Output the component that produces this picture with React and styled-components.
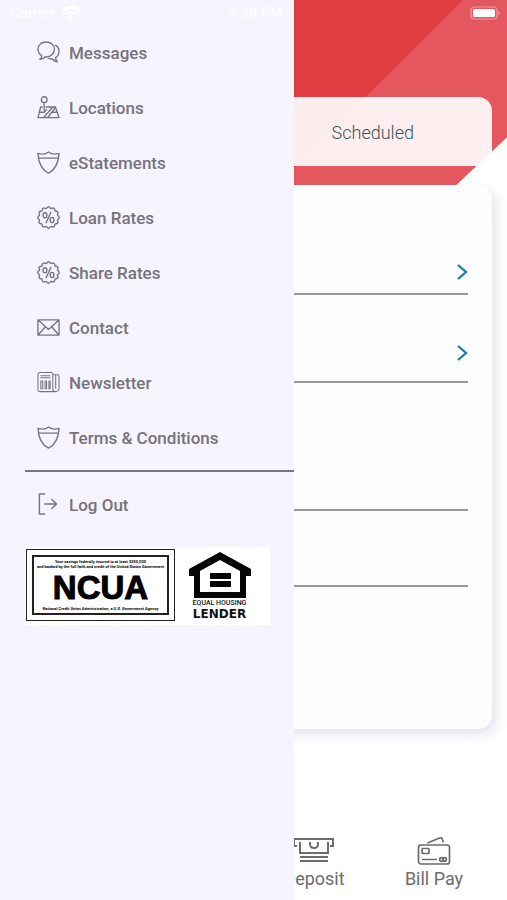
import React from "react";
import styled, { createGlobalStyle } from "styled-components";

const GlobalStyle = createGlobalStyle`
  *, *::before, *::after { box-sizing: border-box; }
  body { margin: 0; background: #fff; font-family: Roboto, "Liberation Sans", sans-serif; }
  button { font: inherit; color: inherit; border: 0; padding: 0; background: none; cursor: pointer; }
  svg { display: block; flex: none; }
`;

const Screen = styled.div`
  position: relative;
  min-height: 100vh;
  display: flex;
  flex-direction: column;
  overflow: hidden;
`;

const StatusBar = styled.div`
  position: absolute;
  inset: 0 0 auto;
  z-index: 3;
  height: 26px;
  padding: 0 6px 0 10px;
  display: grid;
  grid-template-columns: 1fr auto 1fr;
  align-items: center;
  color: #fff;
  font-size: 15px;
`;

const Signal = styled.div`
  display: flex;
  align-items: center;
  gap: 6px;
`;

const BatterySlot = styled.div`
  justify-self: end;
`;

const Header = styled.header`
  position: relative;
  height: 185px;
  padding: 97px 15px 19px;
  &::before {
    content: "";
    position: absolute;
    inset: 0;
    background: #e03d42;
    clip-path: polygon(0 0, 100% 0, 100% 137px, calc(100% - 51px) 100%, 0 100%);
  }
  &::after {
    content: "";
    position: absolute;
    inset: 0;
    background: #e4575f;
    clip-path: polygon(calc(100% - 44px) 0, 100% 0, 100% 137px, calc(100% - 51px) 100%, calc(100% - 230px) 100%);
  }
`;

const Tabs = styled.div`
  position: relative;
  z-index: 1;
  height: 69px;
  display: flex;
  justify-content: flex-end;
  border-radius: 14px 14px 0 0;
  background: rgba(255, 255, 255, 0.9);
`;

const Tab = styled.button`
  flex: 0 0 50%;
  && {
    padding-top: 2px;
    color: #35565b;
    font-size: 18px;
    font-weight: 300;
  }
`;

const Card = styled.main`
  margin: 0 15px;
  padding: 0 24px 142px;
  border-radius: 14px;
  background: #fefefe;
  box-shadow: 4px 5px 12px 1px #e6e6f1;
`;

const Field = styled.div`
  height: ${(p) => p.$height}px;
  padding-bottom: ${(p) => p.$lift || 0}px;
  display: flex;
  align-items: flex-end;
  justify-content: flex-end;
  border-bottom: 2px solid #999;
`;

const BottomNav = styled.nav`
  margin-top: auto;
  padding: 0 13px 9px 0;
  display: flex;
  justify-content: flex-end;
`;

const NavItem = styled.button`
  width: 120px;
  display: flex;
  flex-direction: column;
  align-items: center;
  gap: 1px;
  && { color: #6c6c6e; font-size: 18px; line-height: 24px; }
`;

const Drawer = styled.aside`
  position: absolute;
  inset: 0 auto 0 0;
  z-index: 2;
  width: 58%;
  padding-top: 25px;
  background: #f6f4fe;
  color: #75737c;
`;

const Menu = styled.nav`
  display: flex;
  flex-direction: column;
  margin-left: 25px;
`;

const Divider = styled.hr`
  height: 2px;
  margin: 5px 0 5px 25px;
  border: 0;
  background: #797681;
`;

const MenuItem = styled.a`
  height: 55px;
  padding-left: 12px;
  display: flex;
  align-items: center;
  gap: 9px;
  color: inherit;
  text-decoration: none;
  font-size: 17px;
  font-weight: 500;
`;

const Seals = styled.div`
  width: 245px;
  margin: 15px 0 0 25px;
  padding: 2px 0 4px 1px;
  display: flex;
  align-items: flex-start;
  background: #fff;
`;

const NcuaSeal = styled.div`
  width: 149px;
  padding: 5px;
  border: 1px solid #222;
  color: #000;
`;

const NcuaFrame = styled.div`
  height: 60px;
  display: flex;
  flex-direction: column;
  align-items: center;
  justify-content: space-between;
  border: 2px solid #222;
  padding: 2px 0;
  white-space: nowrap;
`;

const FinePrint = styled.small`
  font-family: Roboto, sans-serif;
  font-size: 4px;
  line-height: 5px;
  font-weight: 700;
  text-align: center;
`;

const NcuaName = styled.strong`
  font-family: "Liberation Sans", sans-serif;
  font-size: 33px;
  line-height: 32px;
  -webkit-text-stroke: 1px #000;
`;

const Housing = styled.div`
  flex: 1;
  padding: 3px 6px 0 0;
  display: flex;
  flex-direction: column;
  align-items: center;
  color: #111;
  white-space: nowrap;
`;

const HousingTop = styled.span`
  margin-top: 1px;
  font-family: Roboto, sans-serif;
  font-size: 7px;
  line-height: 9px;
  font-weight: 500;
`;

const HousingName = styled.strong`
  font-family: "DejaVu Sans", sans-serif;
  font-size: 12px;
  line-height: 12px;
`;

const Icon = ({ children, width = 1.4 }) => (
  <svg width="23" height="23" viewBox="0 0 24 24" fill="none" stroke="currentColor" strokeWidth={width} strokeLinejoin="round" strokeLinecap="round" aria-hidden="true">
    {children}
  </svg>
);

const MessagesIcon = () => (
  <Icon>
    <path d="M9.500 1C4.700 1 1 4.300 1 8.700c0 2.900 1.500 5.200 3.900 6.500.2 1.800-.6 2.900-1.900 3.900 2.300.2 4.200-.8 5.300-2.500 5.500.6 9.900-3 9.900-7.900C18.200 4.300 14.300 1 9.500 1Z" />
    <path d="M19.500 4.500c2.200 1.400 3.500 3.500 3.500 6.200 0 3-1.400 5.200-3.600 6.600 0 1.700.6 3.100 1.800 4.300-2.300 0-4-1-5-2.900-1.700.2-3.200 0-4.500-.7" />
  </Icon>
);

const LocationsIcon = () => (
  <Icon>
    <circle cx="7.500" cy="3.800" r="3" />
    <path d="M7.500 7v8M5.500 11.500H3.800L1 22.500h22l-3.800-11H9.500M2.500 17h5L10 14M7 22.500l9.500-11M11 22.500l8-10M16 17h5" />
  </Icon>
);

const ShieldIcon = () => (
  <Icon>
    <path d="M1 2.500c4.500 1.500 8 1 11-1.500 3 2.500 6.500 3 11 1.500C22.500 11 19.500 19.500 12 23 4.500 19.500 1.500 11 1 2.500Z" />
    <path d="M1.800 7.500h20.400" />
  </Icon>
);

const sealPath = (() => {
  const points = [];
  for (let i = 0; i < 72; i += 1) {
    const angle = (i / 72) * Math.PI * 2;
    const radius = 10.5 + 0.8 * Math.cos(angle * 12);
    points.push(`${(12 + radius * Math.cos(angle)).toFixed(2)} ${(12 + radius * Math.sin(angle)).toFixed(2)}`);
  }
  return `M${points.join("L")}Z`;
})();

const RatesIcon = () => (
  <Icon>
    <path d={sealPath} />
    <path d="m14.500 6.500-5 11" />
    <ellipse cx="8.300" cy="9.700" rx="2" ry="2.700" />
    <ellipse cx="15.700" cy="14.500" rx="2" ry="2.700" />
  </Icon>
);

const ContactIcon = () => (
  <Icon>
    <path d="M1 4h22v16H1ZM1.500 4.500 12 14 22.500 4.500M1.500 19.500l7-8M22.500 19.500l-7-8" />
  </Icon>
);

const NewsletterIcon = () => (
  <Icon width={1.1}>
    <path d="M19.500 21.500H3a2 2 0 0 1-2-2v-16a2 2 0 0 1 2-2h11.500a2 2 0 0 1 2 2V18q0 3.500 3 3.500T23 18V6a2 2 0 0 0-2-2h-1.500v14M16.500 4H19M4 5h9.500M4 7h9.500M4 10.500h2v8H4ZM8.500 10.500h1.500v8H8.500ZM12.500 10.500h1.200v8h-1.200Z" />
  </Icon>
);

const LogoutIcon = () => (
  <Icon width={1.5}>
    <path d="M8 1H2.500v21H8M8 11.500h12.500M15.500 6.800l5 4.700-5 4.700" />
  </Icon>
);

const menuItems = [
  ["Messages", MessagesIcon],
  ["Locations", LocationsIcon],
  ["eStatements", ShieldIcon],
  ["Loan Rates", RatesIcon],
  ["Share Rates", RatesIcon],
  ["Contact", ContactIcon],
  ["Newsletter", NewsletterIcon],
  ["Terms & Conditions", ShieldIcon],
];

const Chevron = ({ label }) => (
  <button type="button" aria-label={label}>
    <svg width="12" height="16" viewBox="0 0 12 16" fill="none" stroke="#147caf" strokeWidth="2.300">
      <path d="m2 1 8 7-8 7" />
    </svg>
  </button>
);

export default function App() {
  return (
    <Screen>
      <GlobalStyle />
      <StatusBar>
        <Signal>
          <span>Carrier</span>
          <svg width="20" height="16" viewBox="0 0 20 16" fill="none" stroke="#fff" strokeWidth="2.800" aria-hidden="true">
            <path d="M1.500 6Q10-1.500 18.500 6M4.500 9.500q5.500-4.500 11 0" />
            <path d="m10 15-3-3.500q3-2 6 0Z" fill="#fff" stroke="none" />
          </svg>
        </Signal>
        <span>2:39 PM</span>
        <BatterySlot>
          <svg width="31" height="14" viewBox="0 0 31 14" aria-hidden="true">
            <rect x="1" y="1" width="26" height="12" rx="3.500" fill="none" stroke="#f09a9e" strokeWidth="1.200" />
            <rect x="3" y="3" width="22" height="8" rx="1.500" fill="#fff" />
            <path d="M28.500 5v4q1.500-.5 1.500-2t-1.500-2" fill="#f09a9e" />
          </svg>
        </BatterySlot>
      </StatusBar>

      <Header>
        <Tabs>
          <Tab type="button">Scheduled</Tab>
        </Tabs>
      </Header>
      <Card>
        <Field $height={110} $lift={13}><Chevron label="From account" /></Field>
        <Field $height={88} $lift={20}><Chevron label="To account" /></Field>
        <Field $height={128} />
        <Field $height={76} />
      </Card>
      <BottomNav>
        <NavItem type="button">
          <svg width="42" height="30" viewBox="0 0 42 30" fill="none" stroke="currentColor" strokeWidth="2" aria-hidden="true">
            <path d="M4 10H1V3h39v7h-3M7 6v11h28V6M17 6v2q0 4 4 4t4-4V6M7 21h28M7 25h28" />
          </svg>
          Deposit
        </NavItem>
        <NavItem type="button">
          <svg width="34" height="30" viewBox="0 0 34 30" fill="none" stroke="currentColor" strokeWidth="1.700" aria-hidden="true">
            <rect x="1.500" y="9" width="31" height="19" rx="2.500" />
            <rect x="5" y="12.500" width="7" height="5" rx="1" />
            <path d="M5 23.500h15M10.500 7l12-5q2-.8 2.700 1L26.500 6.500" />
            <circle cx="24.500" cy="23.500" r="1.800" />
            <circle cx="27.500" cy="23.500" r="1.800" />
          </svg>
          Bill Pay
        </NavItem>
      </BottomNav>

      <Drawer>
        <Menu aria-label="Main menu">
          {menuItems.map(([label, Glyph]) => (
            <MenuItem href="#" key={label}><Glyph />{label}</MenuItem>
          ))}
        </Menu>
        <Divider />
        <Menu aria-label="Session">
          <MenuItem href="#"><LogoutIcon />Log Out</MenuItem>
        </Menu>
        <Seals>
          <NcuaSeal>
            <NcuaFrame>
              <FinePrint>
                Your savings federally insured to at least $250,000<br />
                and backed by the full faith and credit of the United States Government
              </FinePrint>
              <NcuaName>NCUA</NcuaName>
              <FinePrint>National Credit Union Administration, a U.S. Government Agency</FinePrint>
            </NcuaFrame>
          </NcuaSeal>
          <Housing>
            <svg width="62" height="46" viewBox="0 0 62 46" aria-hidden="true">
              <path fill="#050505" fillRule="evenodd" d="M31 0 62 17v7h-5v22H5V24H0v-7ZM31 8 11 19v21h40V19Z" />
              <path fill="#050505" d="M21 21h21v6H21Zm0 8h21v6H21Z" />
            </svg>
            <HousingTop>EQUAL HOUSING</HousingTop>
            <HousingName>LENDER</HousingName>
          </Housing>
        </Seals>
      </Drawer>
    </Screen>
  );
}
